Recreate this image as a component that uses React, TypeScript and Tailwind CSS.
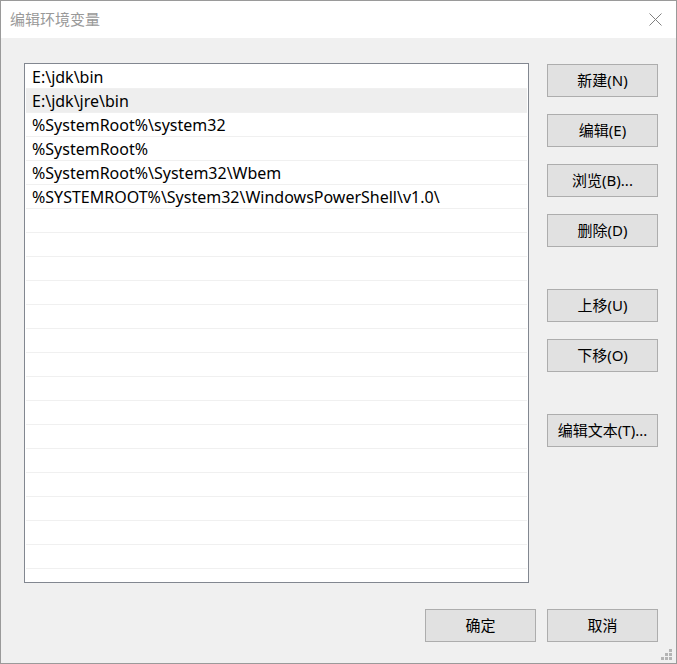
const paths = [
  'E:\\jdk\\bin',
  'E:\\jdk\\jre\\bin',
  '%SystemRoot%\\system32',
  '%SystemRoot%',
  '%SystemRoot%\\System32\\Wbem',
  '%SYSTEMROOT%\\System32\\WindowsPowerShell\\v1.0\\',
];

const ROW_COUNT = 21;

const font = { fontFamily: '"Noto Sans", "Noto Sans CJK SC", sans-serif' };

const Button = ({ label, className = '' }: { label: string; className?: string }) => (
  <button
    className={`w-[111px] h-[33px] bg-[#e1e1e1] border border-[#adadad] text-[15px] text-black leading-none flex items-center justify-center ${className}`}
  >
    {label}
  </button>
);

const CloseIcon = () => (
  <svg width="13" height="13" viewBox="0 0 13 13">
    <path d="M0.5 0.5 L12.5 12.5 M12.5 0.5 L0.5 12.5" stroke="#808080" strokeWidth="1" />
  </svg>
);

const SizeGrip = () => (
  <svg width="12" height="12" viewBox="0 0 12 12" className="absolute right-[3px] bottom-[2px]">
    <g fill="#b4b4b4">
      <rect x="8" y="0" width="3" height="3" />
      <rect x="4" y="4" width="3" height="3" />
      <rect x="8" y="4" width="3" height="3" />
      <rect x="0" y="8" width="3" height="3" />
      <rect x="4" y="8" width="3" height="3" />
      <rect x="8" y="8" width="3" height="3" />
    </g>
  </svg>
);

export default function App() {
  const selected = 1;

  return (
    <div
      className="relative w-[677px] h-[664px] border border-[#9a9a9a] bg-[#f0f0f0] flex flex-col"
      style={font}
    >
      {/* Title bar */}
      <div className="h-[37px] bg-white flex items-center justify-between pl-[9px] pr-[14px] shrink-0">
        <span className="text-[15px] text-[#999999]">编辑环境变量</span>
        <CloseIcon />
      </div>

      {/* Body */}
      <div className="flex-1 flex flex-col pl-[23px] pr-[18px] pt-[25px]">
        <div className="flex gap-[18px]">
          {/* Path list */}
          <div className="w-[505px] h-[520px] bg-white border border-[#828790] p-px overflow-hidden">
            {Array.from({ length: ROW_COUNT }).map((_, i) => (
              <div
                key={i}
                className={`h-[24px] pl-[6px] flex items-center text-[16px] text-black whitespace-nowrap border-b border-[#f0f0f0] ${
                  i === selected ? 'bg-[#eeeeee]' : ''
                }`}
              >
                {paths[i] ?? ''}
              </div>
            ))}
          </div>

          {/* Action buttons */}
          <div className="flex flex-col pt-px">
            <div className="flex flex-col gap-[17px]">
              <Button label="新建(N)" />
              <Button label="编辑(E)" />
              <Button label="浏览(B)..." />
              <Button label="删除(D)" />
            </div>
            <div className="flex flex-col gap-[17px] mt-[42px]">
              <Button label="上移(U)" />
              <Button label="下移(O)" />
            </div>
            <Button label="编辑文本(T)..." className="mt-[42px]" />
          </div>
        </div>

        {/* Dialog buttons */}
        <div className="flex justify-end gap-[11px] mt-[26px]">
          <Button label="确定" />
          <Button label="取消" />
        </div>
      </div>

      <SizeGrip />
    </div>
  );
}
